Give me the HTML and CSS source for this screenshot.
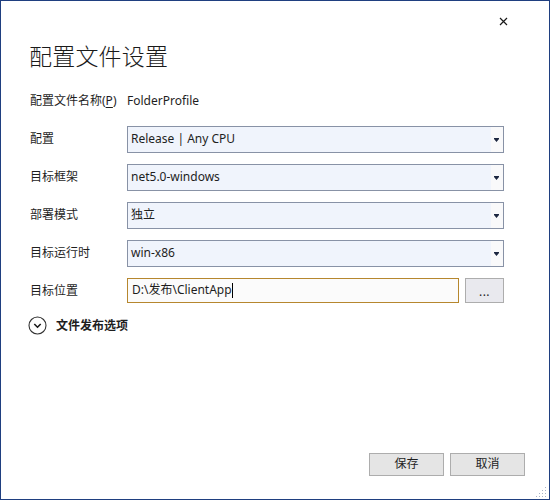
FILE: index.html
```html
<!DOCTYPE html>
<html lang="zh-CN">
<head>
<meta charset="UTF-8">
<title>配置文件设置</title>
<link rel="stylesheet" href="styles.css">
</head>
<body>
<div class="dialog">
	<div class="titlebar">
		<span class="close">
			<svg width="9" height="9" viewBox="0 0 9 9"><path d="M1 1L8 8M8 1L1 8" stroke="#1a1a1a" stroke-width="1.2" fill="none"/></svg>
		</span>
	</div>
	<h1 class="title">配置文件设置</h1>

	<div class="form">
		<div class="label">配置文件名称(<u>P</u>)</div>
		<div class="plain">FolderProfile</div>

		<div class="label">配置</div>
		<div class="select"><span class="value">Release | Any CPU</span><span class="arrow"><svg width="5" height="4" viewBox="0 0 5 4"><path d="M0 0H5V1H0Z M0 1H5L2.5 4Z" fill="#1d2740"/></svg></span></div>

		<div class="label">目标框架</div>
		<div class="select"><span class="value">net5.0-windows</span><span class="arrow"><svg width="5" height="4" viewBox="0 0 5 4"><path d="M0 0H5V1H0Z M0 1H5L2.5 4Z" fill="#1d2740"/></svg></span></div>

		<div class="label">部署模式</div>
		<div class="select"><span class="value">独立</span><span class="arrow"><svg width="5" height="4" viewBox="0 0 5 4"><path d="M0 0H5V1H0Z M0 1H5L2.5 4Z" fill="#1d2740"/></svg></span></div>

		<div class="label">目标运行时</div>
		<div class="select"><span class="value">win-x86</span><span class="arrow"><svg width="5" height="4" viewBox="0 0 5 4"><path d="M0 0H5V1H0Z M0 1H5L2.5 4Z" fill="#1d2740"/></svg></span></div>

		<div class="label">目标位置</div>
		<div class="path-row">
			<div class="textbox">D:\发布\ClientApp<span class="caret"></span></div>
			<div class="browse">...</div>
		</div>
	</div>

	<div class="expander">
		<svg width="19" height="19" viewBox="0 0 19 19"><circle cx="9.5" cy="9.5" r="8.5" stroke="#333" stroke-width="1.1" fill="none"/><path d="M6.3 8L9.5 11.2L12.7 8" stroke="#1a1a1a" stroke-width="1.6" fill="none"/></svg>
		<span>文件发布选项</span>
	</div>

	<div class="spacer"></div>

	<div class="footer">
		<div class="btn">保存</div>
		<div class="btn">取消</div>
	</div>
	<svg class="grip" width="11" height="11" viewBox="0 0 11 11">
		<g fill="#a9b3c6">
			<rect x="9" y="1" width="1" height="1"/>
			<rect x="6" y="4" width="1" height="1"/><rect x="9" y="4" width="1" height="1"/>
			<rect x="3" y="7" width="1" height="1"/><rect x="6" y="7" width="1" height="1"/><rect x="9" y="7" width="1" height="1"/>
			<rect x="0" y="10" width="1" height="1"/><rect x="3" y="10" width="1" height="1"/><rect x="6" y="10" width="1" height="1"/><rect x="9" y="10" width="1" height="1"/>
		</g>
	</svg>
</div>
</body>
</html>
```
FILE: styles.css
```css
* {box-sizing: border-box;}

body {
	margin: 0;
	background: #fff;
	font: normal 400 12px/1.2 'Noto Sans', 'Noto Sans CJK SC', sans-serif;
	color: #1e1e1e;}

.dialog {
	position: relative;
	width: 550px;
	height: 500px;
	border: 1px solid #1f3f80;
	display: flex;
	flex-direction: column;
	background: #fff;}

.titlebar {
	height: 38px;
	display: flex;
	justify-content: flex-end;
	padding: 16px 41px 0 0;}

.close {width: 9px; height: 9px; display: block;}
.close svg {display: block;}

.title {
	margin: 0 0 0 28px;
	height: 36px;
	font: normal 300 23px/32px 'Noto Sans CJK SC', sans-serif;
	color: #1a1a1a;
	letter-spacing: 0.2px;}

.form {
	margin-top: 13px;
	padding: 0 45px 0 29px;
	display: grid;
	grid-template-columns: 97px 1fr;
	grid-auto-rows: 27px;
	row-gap: 11px;
	align-items: center;}

.label {color: #1e1e1e;}
.label u {text-decoration-thickness: 1px; text-underline-offset: 2px;}
.plain {padding-left: 0;}

.select {
	height: 27px;
	display: flex;
	border: 1px solid #8892a6;}

.select .value {
	flex: 1;
	display: flex;
	align-items: center;
	padding-left: 3px;
	background: #f0f4fc;}

.select .arrow {
	width: 12px;
	display: flex;
	align-items: center;
	justify-content: center;
	padding-right: 2px;
	background: #f9f9fa;}
.select .arrow svg {display: block; margin-top: 1px;}

.path-row {
	display: flex;
	gap: 6px;
	height: 25px;
	align-self: start;}

.textbox {
	flex: 1;
	display: flex;
	align-items: center;
	padding-left: 4px;
	border: 1px solid #b6872e;
	background: #fbfbfb;}

.caret {
	display: inline-block;
	width: 1px;
	height: 15px;
	background: #000;}

.browse {
	width: 39px;
	display: flex;
	align-items: center;
	justify-content: center;
	padding-top: 3px;
	border: 1px solid #adadad;
	background: #e9e9ee;
	letter-spacing: 0.5px;}

.expander {
	margin: 11px 0 0 27px;
	display: flex;
	align-items: center;
	gap: 9px;
	font-weight: 700;
	font-family: 'Noto Sans CJK SC', sans-serif;}
.expander svg {display: block;}

.spacer {flex: 1;}

.footer {
	display: flex;
	justify-content: flex-end;
	gap: 6px;
	padding: 0 24px 23px 0;}

.btn {
	width: 75px;
	height: 23px;
	display: flex;
	align-items: center;
	justify-content: center;
	border: 1px solid #adadad;
	background: #e5e5e5;}

.grip {
	position: absolute;
	right: 2px;
	bottom: 2px;}
```
